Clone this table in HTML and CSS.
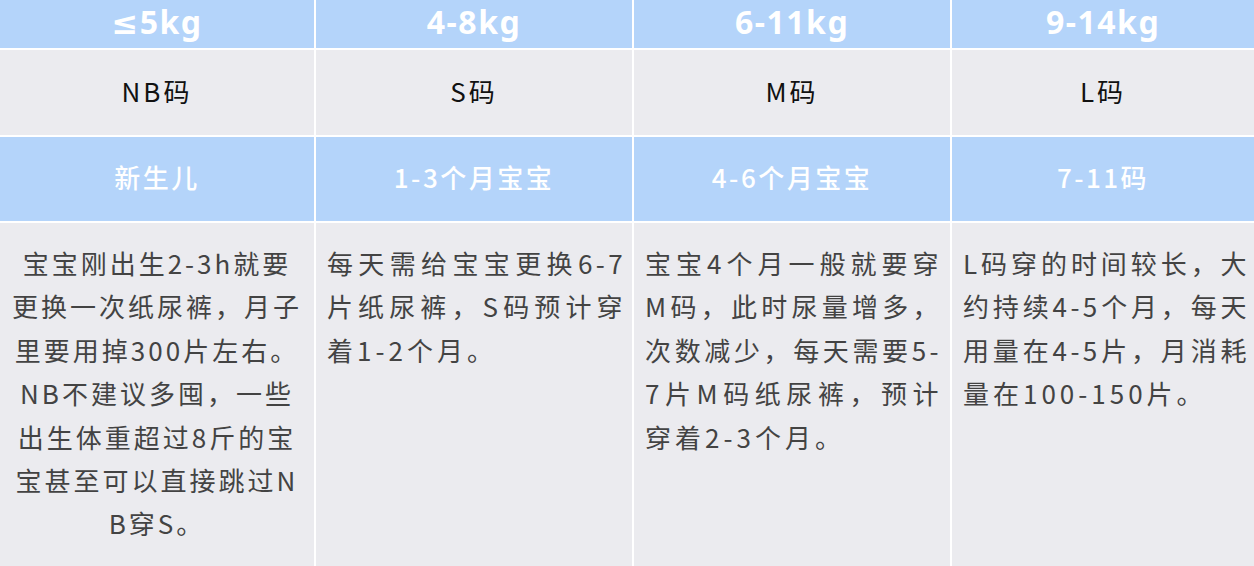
FILE: index.html
```html
<!DOCTYPE html>
<html lang="zh">
<head>
<meta charset="utf-8">
<title>纸尿裤尺码</title>
<link rel="stylesheet" href="styles.css">
</head>
<body>
<div class="table">
  <div class="cell head">≤5kg</div>
  <div class="cell head">4-8kg</div>
  <div class="cell head">6-11kg</div>
  <div class="cell head">9-14kg</div>

  <div class="cell size">NB码</div>
  <div class="cell size">S码</div>
  <div class="cell size">M码</div>
  <div class="cell size">L码</div>

  <div class="cell age">新生儿</div>
  <div class="cell age">1-3个月宝宝</div>
  <div class="cell age">4-6个月宝宝</div>
  <div class="cell age">7-11码</div>

  <div class="cell desc center">
    <span class="line">宝宝刚出生2-3h就要</span>
    <span class="line">更换一次纸尿裤，月子</span>
    <span class="line">里要用掉300片左右。</span>
    <span class="line">NB不建议多囤，一些</span>
    <span class="line">出生体重超过8斤的宝</span>
    <span class="line">宝甚至可以直接跳过N</span>
    <span class="line">B穿S。</span>
  </div>
  <div class="cell desc just col2">
    <span class="line">每天需给宝宝更换6-7</span>
    <span class="line">片纸尿裤，S码预计穿</span>
    <span class="line last">着1-2个月。</span>
  </div>
  <div class="cell desc just col3">
    <span class="line">宝宝4个月一般就要穿</span>
    <span class="line">M码，此时尿量增多，</span>
    <span class="line">次数减少，每天需要5-</span>
    <span class="line">7片M码纸尿裤，预计</span>
    <span class="line last">穿着2-3个月。</span>
  </div>
  <div class="cell desc just col4">
    <span class="line">L码穿的时间较长，大</span>
    <span class="line">约持续4-5个月，每天</span>
    <span class="line">用量在4-5片，月消耗</span>
    <span class="line last">量在100-150片。</span>
  </div>
</div>
</body>
</html>
```

FILE: styles.css
```css
html, body {
  margin: 0;
  padding: 0;
  background: #ffffff;
}

body {
  font-family: "Noto Sans CJK SC", "Noto Sans", sans-serif;
  width: 1254px;
  height: 566px;
  overflow: hidden;
}

.table {
  display: grid;
  grid-template-columns: 314px 316px 316px 1fr;
  grid-template-rows: 48px 85px 84px 1fr;
  gap: 2px;
  height: 566px;
  background: #ffffff;
}

.cell {
  display: flex;
  align-items: center;
  justify-content: center;
  white-space: nowrap;
}

.head {
  background: #b4d4fa;
  color: #ffffff;
  font-family: "Noto Sans", "DejaVu Sans", "Noto Sans CJK SC", sans-serif;
  font-weight: 700;
  font-size: 32px;
  letter-spacing: 1.5px;
  line-height: 1;
  padding-bottom: 4px;
}

.size {
  background: #ebebef;
  color: #111111;
  font-size: 26px;
  letter-spacing: 3px;
  padding-bottom: 5px;
}

.age {
  background: #b4d4fa;
  color: #ffffff;
  font-size: 26px;
  font-weight: 500;
  letter-spacing: 2.5px;
  padding-bottom: 5px;
}

.desc {
  background: #ebebef;
  color: #434343;
  font-size: 26px;
  line-height: 43.4px;
  flex-direction: column;
  align-items: stretch;
  justify-content: flex-start;
  padding: 18px 6px 0 11px;
}

.line {
  display: block;
}

.desc.center {
  letter-spacing: 3px;
  text-align: center;
  padding-left: 0;
  padding-right: 0;
}

.desc.just {
  letter-spacing: 3.4px;
}

.desc.just .line {
  text-align: justify;
  text-align-last: justify;
}

.desc.just .line.last {
  text-align-last: left;
  letter-spacing: 4px;
}

.desc.col3 {
  padding-right: 8px;
}

.desc.col4 {
  padding-right: 4px;
}
```
